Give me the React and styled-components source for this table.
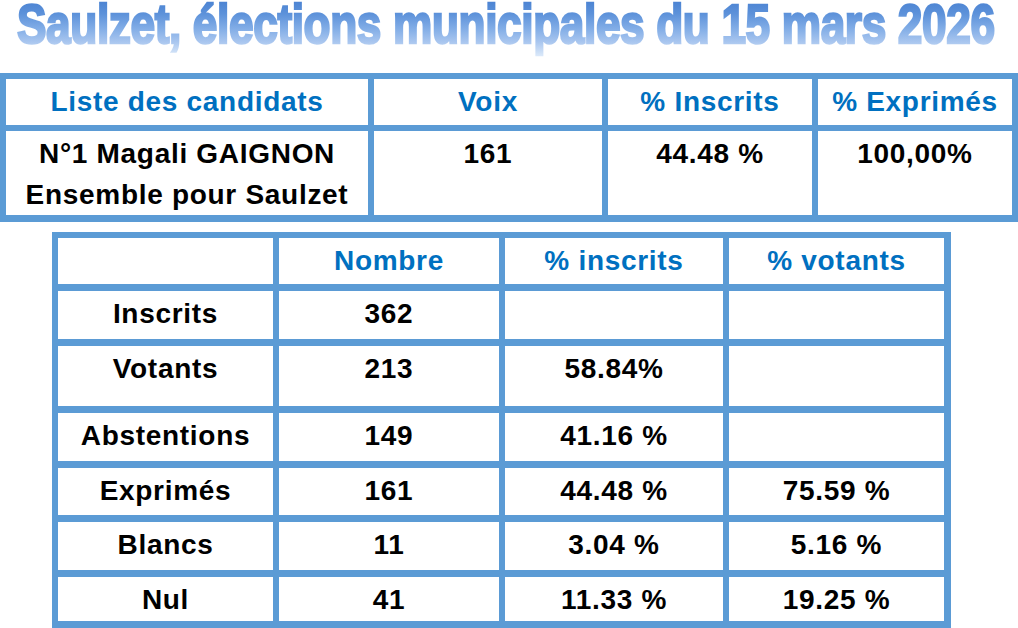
import React from "react";
import styled, { createGlobalStyle } from "styled-components";

const GlobalStyle = createGlobalStyle`
  html, body {
    margin: 0;
    padding: 0;
    background: #fff;
  }
  body {
    width: 1018px;
    height: 628px;
    overflow: hidden;
    font-family: "Liberation Sans", Arial, sans-serif;
  }
`;

const Page = styled.main`
  display: flex;
  flex-direction: column;
  width: 1018px;
`;

// black heavy text, tinted by a "screen" gradient overlay
const TitleBar = styled.header`
  position: relative;
  isolation: isolate;
  display: flex;
  justify-content: center;
  height: 73px;
  overflow: hidden;
  background: #fff;

  &::after {
    content: "";
    position: absolute;
    inset: 0;
    pointer-events: none;
    background: linear-gradient(
      180deg,
      #4a82d2 0px,
      #5d92da 14px,
      #80ace6 28px,
      #a9c6ef 42px,
      #d4e4f8 54px,
      #ffffff 66px
    );
    mix-blend-mode: screen;
  }
`;

const Title = styled.h1`
  flex: none;
  margin: 0 0 0 -6px;
  font-family: "Liberation Sans", Arial, sans-serif;
  font-weight: 700;
  font-size: 56px;
  line-height: 47px;
  height: 47px;
  white-space: nowrap;
  letter-spacing: -0.5px;
  color: #000;
  -webkit-text-stroke: 2.5px #000;
  transform: scaleX(0.79);
  transform-origin: center;
`;

const Grid = styled.section`
  display: grid;
  grid-template-columns: ${(p) => p.$cols};
  grid-template-rows: ${(p) => p.$rows};
  column-gap: 6px;
  row-gap: ${(p) => p.$rowGap || "6px"};
  padding: ${(p) => p.$pad};
  background: #5b9bd5;
  width: max-content;
  margin: ${(p) => p.$margin || "0"};
`;

const Cell = styled.div`
  background: #fff;
  text-align: center;
  padding-top: 2px;
  font-family: "Liberation Sans", Arial, sans-serif;
  font-weight: 700;
  font-size: 28px;
  letter-spacing: 0.7px;
  line-height: 41px;
  color: ${(p) => (p.$head ? "#0070c0" : "#000")};
  white-space: nowrap;
`;

const candidateHead = ["Liste des candidats", "Voix", "% Inscrits", "% Exprimés"];

const statsHead = ["", "Nombre", "% inscrits", "% votants"];
const statsRows = [
  ["Inscrits", "362", "", ""],
  ["Votants", "213", "58.84%", ""],
  ["Abstentions", "149", "41.16 %", ""],
  ["Exprimés", "161", "44.48 %", "75.59 %"],
  ["Blancs", "11", "3.04 %", "5.16 %"],
  ["Nul", "41", "11.33 %", "19.25 %"],
];

export default function App() {
  return (
    <>
      <GlobalStyle />
      <Page>
        <TitleBar>
          <Title>Saulzet, élections municipales du 15 mars 2026</Title>
        </TitleBar>

        <Grid
          $cols="362px 228px 204px 194px"
          $rows="46px 84px"
          $pad="6px 6px 7px"
        >
          {candidateHead.map((h) => (
            <Cell key={h} $head>
              {h}
            </Cell>
          ))}
          <Cell>
            N°1 Magali GAIGNON
            <br />
            Ensemble pour Saulzet
          </Cell>
          <Cell>161</Cell>
          <Cell>44.48 %</Cell>
          <Cell>100,00%</Cell>
        </Grid>

        <Grid
          $cols="215px 220px 218px 215px"
          $rows="46px 48px 60px 48px 47px 48px 44px"
          $rowGap="7px"
          $pad="6px 7px 7px 6px"
          $margin="10px 0 0 52px"
        >
          {statsHead.map((h, i) => (
            <Cell key={i} $head>
              {h}
            </Cell>
          ))}
          {statsRows.map((row) =>
            row.map((v, i) => <Cell key={row[0] + i}>{v}</Cell>)
          )}
        </Grid>
      </Page>
    </>
  );
}
